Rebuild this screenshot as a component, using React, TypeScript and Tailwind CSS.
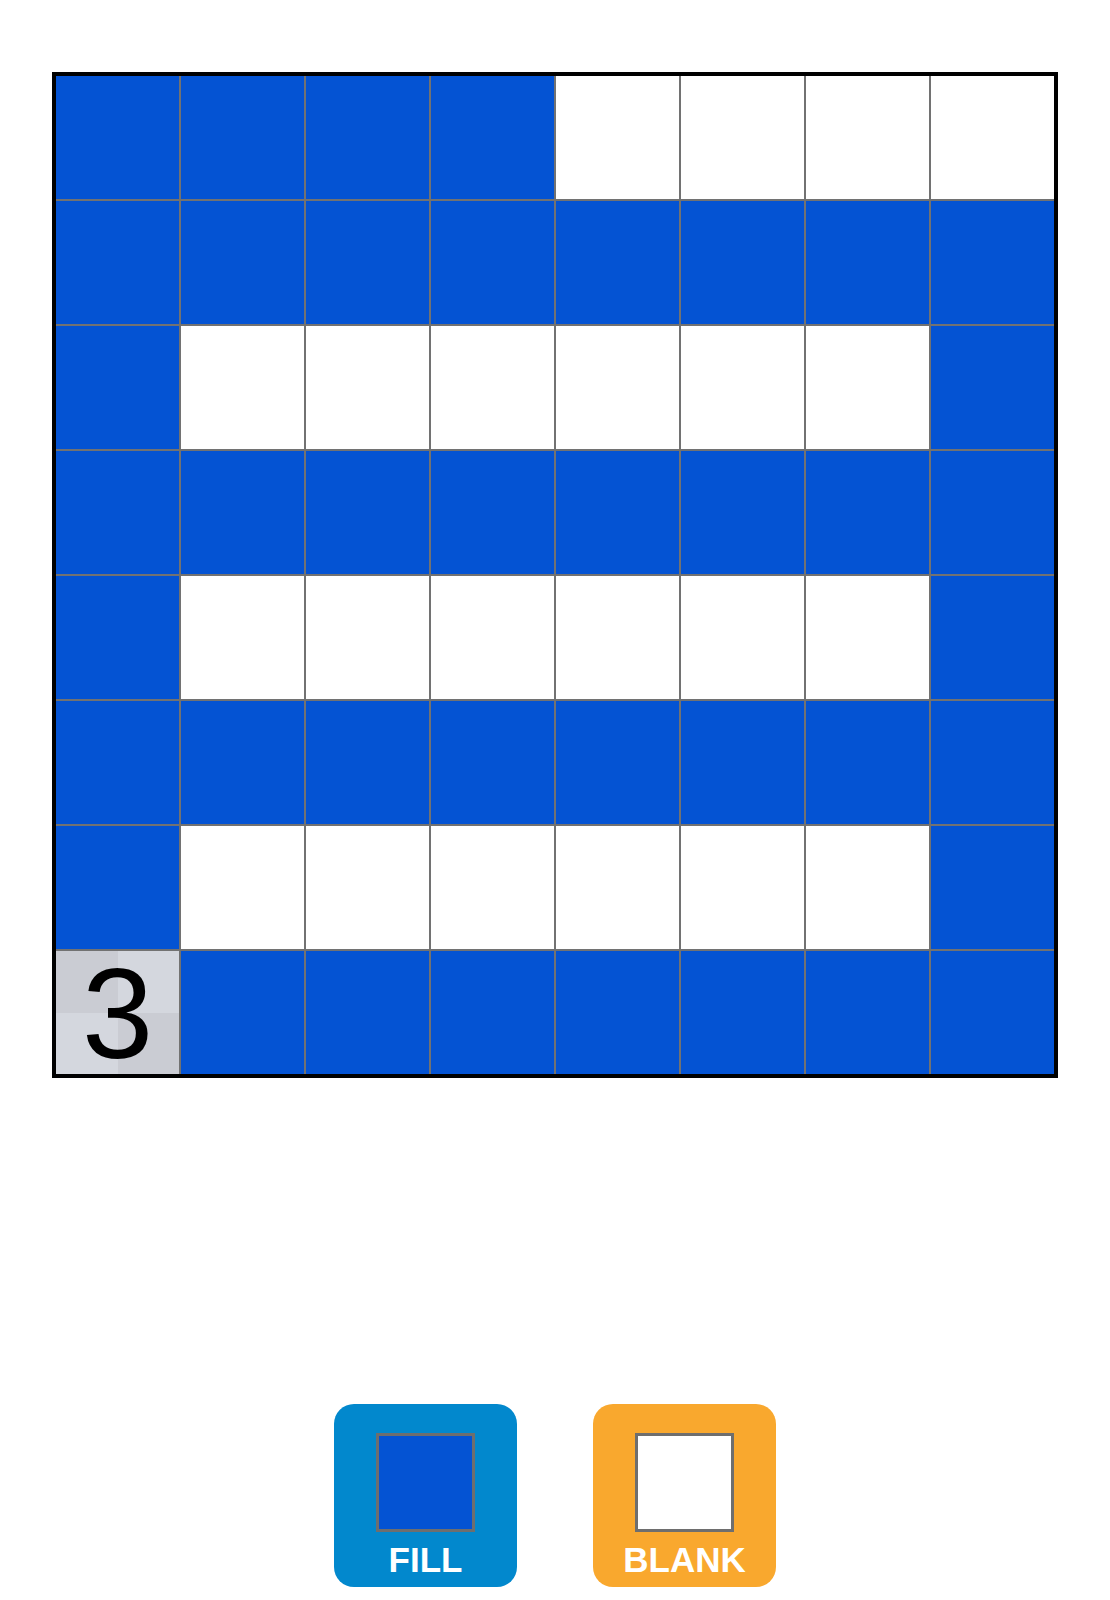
import React from "react";

const pattern: number[][] = [
  [1, 1, 1, 1, 0, 0, 0, 0],
  [1, 1, 1, 1, 1, 1, 1, 1],
  [1, 0, 0, 0, 0, 0, 0, 1],
  [1, 1, 1, 1, 1, 1, 1, 1],
  [1, 0, 0, 0, 0, 0, 0, 1],
  [1, 1, 1, 1, 1, 1, 1, 1],
  [1, 0, 0, 0, 0, 0, 0, 1],
  [2, 1, 1, 1, 1, 1, 1, 1],
];

function Cell({ v }: { v: number }) {
  if (v === 2) {
    return (
      <div className="relative w-[123px] h-[123px] grid grid-cols-2 grid-rows-2">
        <div className="bg-[#caccd3]" />
        <div className="bg-[#d4d7de]" />
        <div className="bg-[#d4d7de]" />
        <div className="bg-[#caccd3]" />
        <div className="absolute inset-0 flex items-center justify-center pt-[3px] text-[128px] leading-none text-black font-['Liberation_Sans',Arial,sans-serif]">
          3
        </div>
      </div>
    );
  }
  return (
    <div
      className={
        v === 1
          ? "w-[123px] h-[123px] bg-[#0453d3]"
          : "w-[123px] h-[123px] bg-white"
      }
    />
  );
}

export default function App() {
  return (
    <div className="w-[1110px] h-[1600px] bg-white flex flex-col items-center font-['Liberation_Sans',Arial,sans-serif]">
      <div className="mt-[72px] border-[4px] border-black bg-[#727272] grid grid-cols-8 gap-[2px]">
        {pattern.flatMap((row, r) =>
          row.map((v, c) => <Cell key={`${r}-${c}`} v={v} />)
        )}
      </div>
      <div className="mt-[326px] flex gap-[76px]">
        <button className="w-[183px] h-[183px] rounded-[20px] bg-[#0288cd] flex flex-col items-center pt-[29px]">
          <div className="w-[99px] h-[99px] border-[3px] border-[#6e6e6e] bg-[#0453d3]" />
          <div className="mt-[10px] text-[35px] leading-none font-bold text-white">
            FILL
          </div>
        </button>
        <button className="w-[183px] h-[183px] rounded-[20px] bg-[#f9a82e] flex flex-col items-center pt-[29px]">
          <div className="w-[99px] h-[99px] border-[3px] border-[#6e6e6e] bg-white" />
          <div className="mt-[10px] text-[35px] leading-none font-bold text-white">
            BLANK
          </div>
        </button>
      </div>
    </div>
  );
}
